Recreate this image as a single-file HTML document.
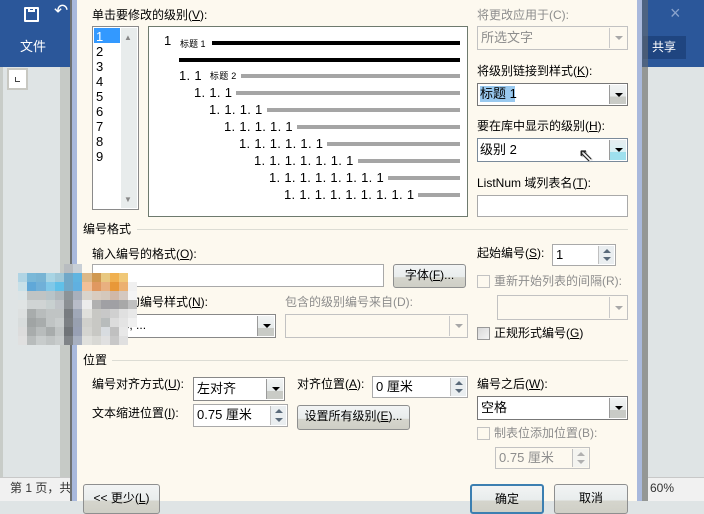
<!DOCTYPE html>
<html><head><meta charset="utf-8"><style>
*{box-sizing:border-box;margin:0;padding:0}
body{width:704px;height:501px;overflow:hidden;position:relative;background:#dfe4e5;font-family:"Liberation Sans","Noto Sans CJK SC",sans-serif;font-size:12px;color:#000}
.a{position:absolute}
.t{position:absolute;white-space:nowrap;line-height:14px}
.dis{color:#8d8d8d}
.box{position:absolute;background:#fff;border:1px solid #a9a9a9}
.box.d{background:#fdf9ef;border-color:#c2c2c2}
.arr{position:absolute;right:1px;top:1px;bottom:1px;width:17px;background:linear-gradient(#f2f4f4 0,#e6eaea 60%,#c9cbc6 61%,#c9cbc6 100%);border-left:1px solid #9a9a9a}
.arr:after{content:"";position:absolute;left:5px;top:50%;margin-top:-2px;border-left:4px solid transparent;border-right:4px solid transparent;border-top:4px solid #000}
.arr.d{background:#fdf9ef;border-left-color:#c9c9c9}
.arr.d:after{border-top-color:#a8a8a8}
.spin{position:absolute;right:1px;top:1px;bottom:1px;width:16px;background:#eaeef0;border-left:1px solid #c0c0c0}
.spin:before,.spin:after{content:"";position:absolute;left:4px;border-left:4px solid transparent;border-right:4px solid transparent}
.spin:before{top:3px;border-bottom:4px solid #5a6a7a}
.spin:after{bottom:3px;border-top:4px solid #5a6a7a}
.spin.d:before{border-bottom-color:#b0b0b0}.spin.d:after{border-top-color:#b0b0b0}
.btn{position:absolute;border:1px solid #8e8f8f;border-radius:3px;background:linear-gradient(#f2f4f4 0,#e8ecec 55%,#d5d5cd 56%,#cfcfc6 100%);text-align:center;line-height:21px}
.btn.b{height:30px;line-height:26px}
.cb{position:absolute;width:13px;height:13px;border:1px solid #c2c2c2;background:#fdf9ef}
.u{text-decoration:underline}
.sep{position:absolute;height:1px;background:#dcdcd4}
.row{position:absolute;display:flex;align-items:center;height:15px;right:8px}
.row span{font-size:13px;letter-spacing:0.3px;white-space:nowrap}
.row i{flex:1;height:4px;background:#a5a5a5;margin-left:4px}
.px{position:absolute;left:18px;top:264px;display:grid;grid-template-columns:repeat(13,9.2px);grid-auto-rows:9px}
</style></head><body>
<div class="a" style="left:0;top:0;width:70px;height:67px;background:#2b579a"></div>
<div class="a" style="left:24px;top:7px;width:15px;height:15px;border:2px solid #fff;border-radius:1px"></div>
<div class="a" style="left:28px;top:7px;width:7px;height:5px;border:2px solid #fff;border-top:none"></div>
<div class="t" style="left:54px;top:4px;color:#fff;font-size:17px">↶</div>
<div class="t" style="left:20px;top:40px;color:#fff;font-size:13px">文件</div>
<div class="a" style="left:7px;top:68px;width:21px;height:22px;background:#c8c8c2"></div>
<div class="a" style="left:9px;top:70px;width:17px;height:18px;background:#fff"></div>
<div class="a" style="left:15px;top:77px;width:5px;height:5px;border-left:1px solid #444;border-bottom:1px solid #444"></div>
<div class="a" style="left:0;top:67px;width:3px;height:410px;background:#c8ccc8"></div>
<div class="a" style="left:60px;top:67px;width:10px;height:410px;background:#c6cac6"></div>
<div class="a" style="left:0;top:477px;width:70px;height:24px;background:#f1f1f1;border-top:1px solid #c8c8c8"></div>
<div class="t" style="left:10px;top:481px;color:#333">第 1 页，共</div>
<div class="a" style="left:70px;top:0;width:2px;height:501px;background:#6f7272"></div>
<div class="a" style="left:72px;top:0;width:5px;height:501px;background:#a9b9dc"></div>
<div class="a" style="left:642px;top:0;width:62px;height:67px;background:#2b579a"></div>
<div class="t" style="left:670px;top:6px;color:#8aa3cc;font-size:18px">×</div>
<div class="a" style="left:643px;top:36px;width:43px;height:23px;background:#1f4580"></div>
<div class="t" style="left:652px;top:40px;color:#fff;font-size:12px">共享</div>
<div class="a" style="left:642px;top:67px;width:6px;height:434px;background:#c6cac6"></div>
<div class="a" style="left:637px;top:0;width:5px;height:501px;background:#a9b9dc"></div>
<div class="a" style="left:642px;top:0;width:6px;height:501px;background:#6c6e6e;opacity:.55"></div>
<div class="a" style="left:648px;top:477px;width:56px;height:24px;background:#f1f1f1;border-top:1px solid #c8c8c8"></div>
<div class="t" style="left:650px;top:481px;color:#333">60%</div>
<div class="a" style="left:77px;top:0;width:560px;height:501px;background:#fdf9ef"></div>

<div class="t" style="left:92px;top:8px">单击要修改的级别(<span class="u">V</span>):</div>
<div class="box" style="left:92px;top:26px;width:47px;height:184px;border-color:#8a8a8a"></div>
<div class="a" style="left:94px;top:28px;width:26px;height:15px;background:#3399ff"></div>
<div class="a" style="left:121px;top:28px;width:16px;height:180px;background:#e8ecec"></div>
<div class="t" style="left:124px;top:31px;font-size:8px;color:#888">▲</div>
<div class="t" style="left:124px;top:193px;font-size:8px;color:#888">▼</div>
<div class="t" style="left:96px;top:29px;color:#fff;font-size:13px;line-height:15px">1</div>
<div class="t" style="left:96px;top:44px;font-size:13px;line-height:15px">2<br>3<br>4<br>5<br>6<br>7<br>8<br>9</div>

<div class="box" style="left:148px;top:26px;width:320px;height:191px;border-color:#6e7a6e"></div>
<div class="t" style="left:164px;top:34px;font-size:13px">1</div>
<div class="t" style="left:180px;top:37px;font-size:9px">标题 1</div>
<div class="a" style="left:212px;top:41px;width:248px;height:4px;background:#000"></div>
<div class="a" style="left:179px;top:58px;width:281px;height:4px;background:#000"></div>
<div class="row" style="left:179px;top:68px;width:281px"><span>1. 1</span><span style="font-size:9px;margin-left:8px">标题 2</span><i></i></div>
<div class="row" style="left:194px;top:85px;width:266px"><span>1. 1. 1</span><i></i></div>
<div class="row" style="left:209px;top:102px;width:251px"><span>1. 1. 1. 1</span><i></i></div>
<div class="row" style="left:224px;top:119px;width:236px"><span>1. 1. 1. 1. 1</span><i></i></div>
<div class="row" style="left:239px;top:136px;width:221px"><span>1. 1. 1. 1. 1. 1</span><i></i></div>
<div class="row" style="left:254px;top:153px;width:206px"><span>1. 1. 1. 1. 1. 1. 1</span><i></i></div>
<div class="row" style="left:269px;top:170px;width:191px"><span>1. 1. 1. 1. 1. 1. 1. 1</span><i></i></div>
<div class="row" style="left:284px;top:187px;width:176px"><span>1. 1. 1. 1. 1. 1. 1. 1. 1</span><i></i></div>

<div class="t dis" style="left:477px;top:8px">将更改应用于(C):</div>
<div class="box d" style="left:477px;top:26px;width:151px;height:24px"><div class="arr d"></div></div>
<div class="t dis" style="left:481px;top:31px;font-size:13px">所选文字</div>
<div class="t" style="left:477px;top:64px">将级别链接到样式(<span class="u">K</span>):</div>
<div class="box" style="left:477px;top:83px;width:151px;height:23px;border-color:#777"><div class="arr"></div></div>
<div class="a" style="left:480px;top:86px;width:35px;height:16px;background:#99c9ef"></div>
<div class="t" style="left:480px;top:87px;font-size:13px">标题 1</div>
<div class="t" style="left:477px;top:119px">要在库中显示的级别(<span class="u">H</span>):</div>
<div class="box" style="left:477px;top:138px;width:151px;height:24px;border-color:#7a8a9a"><div class="arr" style="background:linear-gradient(#e6eef0 0,#d8f0f4 60%,#9ee0ee 61%,#9ee0ee 100%)"></div></div>
<div class="t" style="left:480px;top:143px;font-size:13px">级别 2</div>
<div class="t" style="left:578px;top:148px;font-size:18px;color:#222;text-shadow:1px 1px 1px #aaa">⇖</div>
<div class="t" style="left:477px;top:176px">ListNum 域列表名(<span class="u">T</span>):</div>
<div class="box" style="left:477px;top:195px;width:151px;height:22px"></div>

<div class="t" style="left:83px;top:222px">编号格式</div>
<div class="sep" style="left:137px;top:229px;width:491px"></div>
<div class="t" style="left:92px;top:247px">输入编号的格式(<span class="u">O</span>):</div>
<div class="box" style="left:92px;top:264px;width:292px;height:23px"></div>
<div class="btn" style="left:393px;top:264px;width:73px;height:24px">字体(<span class="u">F</span>)...</div>
<div class="t" style="left:477px;top:246px">起始编号(<span class="u">S</span>):</div>
<div class="box" style="left:552px;top:244px;width:64px;height:22px"><div class="spin"></div></div>
<div class="t" style="left:556px;top:248px;font-size:13px">1</div>
<div class="cb" style="left:477px;top:275px"></div>
<div class="t dis" style="left:494px;top:274px">重新开始列表的间隔(R):</div>
<div class="box d" style="left:497px;top:295px;width:131px;height:25px"><div class="arr d"></div></div>
<div class="t" style="left:92px;top:295px">此级别的编号样式(<span class="u">N</span>):</div>
<div class="box" style="left:92px;top:314px;width:184px;height:24px;border-color:#888"><div class="arr"></div></div>
<div class="t" style="left:96px;top:318px">1, 2, 3, ...</div>
<div class="t dis" style="left:285px;top:295px">包含的级别编号来自(D):</div>
<div class="box d" style="left:285px;top:314px;width:183px;height:24px"><div class="arr d"></div></div>
<div class="cb" style="left:477px;top:327px;background:linear-gradient(135deg,#d8d8d8,#f4f4f4);border-color:#999"></div>
<div class="t" style="left:494px;top:326px">正规形式编号(<span class="u">G</span>)</div>

<div class="t" style="left:83px;top:353px">位置</div>
<div class="sep" style="left:112px;top:360px;width:516px"></div>
<div class="t" style="left:92px;top:377px">编号对齐方式(<span class="u">U</span>):</div>
<div class="box" style="left:193px;top:377px;width:92px;height:24px;border-color:#888"><div class="arr"></div></div>
<div class="t" style="left:197px;top:382px;font-size:13px">左对齐</div>
<div class="t" style="left:297px;top:377px">对齐位置(<span class="u">A</span>):</div>
<div class="box" style="left:372px;top:376px;width:96px;height:22px"><div class="spin"></div></div>
<div class="t" style="left:376px;top:380px;font-size:13px">0 厘米</div>
<div class="t" style="left:477px;top:377px">编号之后(<span class="u">W</span>):</div>
<div class="box" style="left:477px;top:396px;width:151px;height:24px;border-color:#777"><div class="arr"></div></div>
<div class="t" style="left:481px;top:401px;font-size:13px">空格</div>
<div class="t" style="left:92px;top:406px">文本缩进位置(<span class="u">I</span>):</div>
<div class="box" style="left:193px;top:404px;width:95px;height:23px"><div class="spin"></div></div>
<div class="t" style="left:197px;top:408px;font-size:13px">0.75 厘米</div>
<div class="btn" style="left:297px;top:405px;width:113px;height:25px">设置所有级别(<span class="u">E</span>)...</div>
<div class="cb" style="left:477px;top:427px"></div>
<div class="t dis" style="left:494px;top:426px">制表位添加位置(B):</div>
<div class="box d" style="left:495px;top:447px;width:95px;height:22px"><div class="spin d" style="background:#f4f4f0"></div></div>
<div class="t dis" style="left:499px;top:451px;font-size:13px">0.75 厘米</div>

<div class="btn b" style="left:83px;top:484px;width:77px">&lt;&lt; 更少(<span class="u">L</span>)</div>
<div class="btn b" style="left:470px;top:484px;width:74px;border:2px solid #3c7fb1">确定</div>
<div class="btn b" style="left:554px;top:484px;width:74px">取消</div>

<div class="px">
<div></div><div></div><div></div><div></div><div></div><div style="background:#b8bcc0"></div><div style="background:#c8cfd6"></div><div></div><div></div><div></div><div></div><div></div><div></div>
<div style="background:#b0d4e4"></div><div style="background:#7ab8d8"></div><div style="background:#78b4d4"></div><div style="background:#a8d4e4"></div><div style="background:#a0c8d8"></div><div style="background:#70a8c8"></div><div style="background:#60b4e0"></div><div style="background:#dcb888"></div><div style="background:#d09850"></div><div style="background:#e8c880"></div><div style="background:#f0b050"></div><div style="background:#f0c878"></div><div></div>
<div style="background:#c8e0e8"></div><div style="background:#60a8d8"></div><div style="background:#70b0d8"></div><div style="background:#80c8e8"></div><div style="background:#60c0e8"></div><div style="background:#70a8c8"></div><div style="background:#60b0e0"></div><div style="background:#f0c098"></div><div style="background:#e09860"></div><div style="background:#e8b080"></div><div style="background:#e89838"></div><div style="background:#ecb070"></div><div style="background:#f0f0f0"></div>
<div style="background:#dce4e6"></div><div style="background:#c0c4c4"></div><div style="background:#c0c4c4"></div><div style="background:#b8c4c8"></div><div style="background:#b0b8bc"></div><div style="background:#8c9498"></div><div style="background:#a8b0bc"></div><div style="background:#d8d4cc"></div><div style="background:#d8ccc0"></div><div style="background:#d4c8bc"></div><div style="background:#d0b8a8"></div><div style="background:#d4c8c0"></div><div style="background:#f4f4f4"></div>
<div style="background:#e0e4e4"></div><div style="background:#d0d4d4"></div><div style="background:#d0d4d4"></div><div style="background:#c8d0d0"></div><div style="background:#c0c4c8"></div><div style="background:#8c9094"></div><div style="background:#b8bcc8"></div><div style="background:#ececec"></div><div style="background:#b0b0b0"></div><div style="background:#a0a0a4"></div><div style="background:#a0a0a4"></div><div style="background:#a8a8a8"></div><div style="background:#c0c0c0"></div>
<div style="background:#dde0e0"></div><div style="background:#a8acac"></div><div style="background:#b8bcbc"></div><div style="background:#c0c4c4"></div><div style="background:#c0c4c4"></div><div style="background:#787c80"></div><div style="background:#a0a8b8"></div><div style="background:#e0e0dc"></div><div style="background:#c8c8c4"></div><div style="background:#c8c8c8"></div><div style="background:#d0d0d0"></div><div style="background:#e0e0e0"></div><div style="background:#e8e8e8"></div>
<div style="background:#d8dcdc"></div><div style="background:#a0a4a4"></div><div style="background:#a8acac"></div><div style="background:#c0c4c4"></div><div style="background:#c8cccc"></div><div style="background:#7c8084"></div><div style="background:#98a0b0"></div><div style="background:#d0d0cc"></div><div style="background:#c8c8c4"></div><div style="background:#b8bcbc"></div><div style="background:#dcdcdc"></div><div style="background:#e4e4e4"></div><div style="background:#f0f0f0"></div>
<div style="background:#dcdcdc"></div><div style="background:#a8acac"></div><div style="background:#b8bcbc"></div><div style="background:#a8acac"></div><div style="background:#c0c4c4"></div><div style="background:#707478"></div><div style="background:#98a0b4"></div><div style="background:#d4d4d0"></div><div style="background:#c8c8c4"></div><div style="background:#d8dce0"></div><div style="background:#c0c0c0"></div><div style="background:#e8e8e8"></div><div></div>
<div style="background:#e0e0e0"></div><div style="background:#b8bcbc"></div><div style="background:#c8cccc"></div><div style="background:#c0c4c4"></div><div style="background:#c8cccc"></div><div style="background:#808488"></div><div style="background:#a8b0c0"></div><div style="background:#e0e0dc"></div><div style="background:#d8d8d4"></div><div style="background:#e0e0e0"></div><div style="background:#c8c8c8"></div><div style="background:#e0e0e0"></div><div></div>
</div>
</body></html>
